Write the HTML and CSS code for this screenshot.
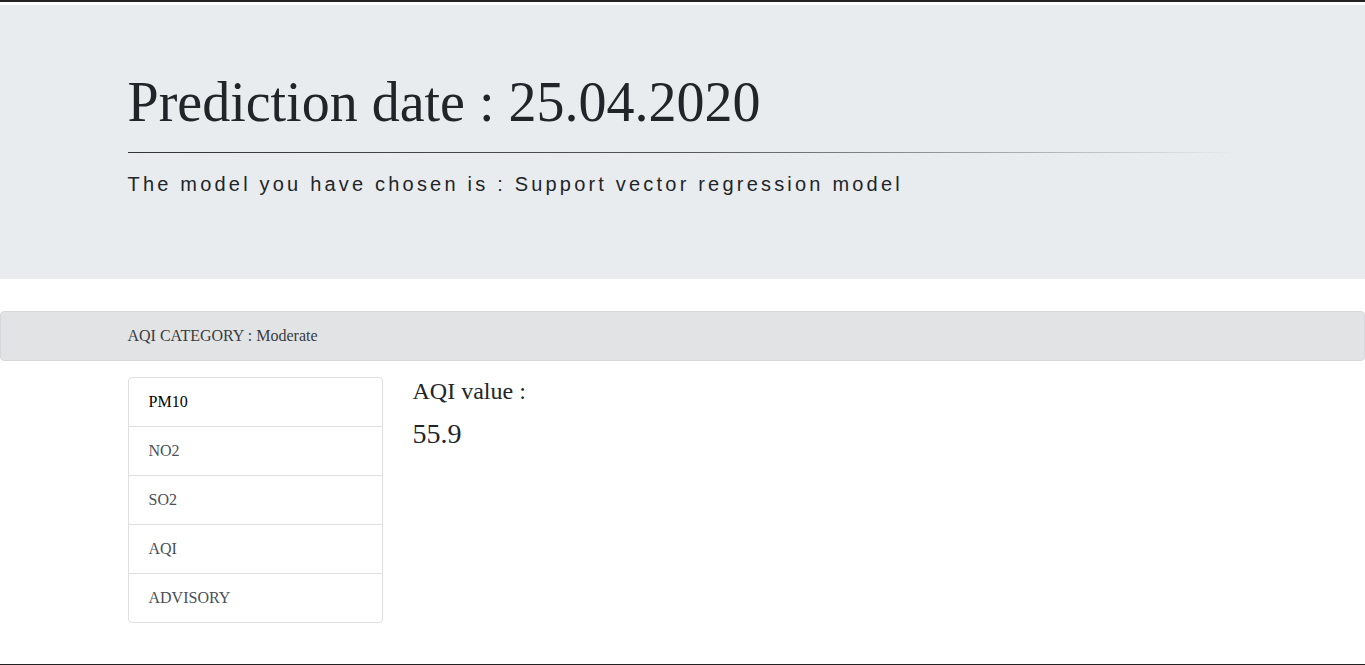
FILE: index.html
```html
<!DOCTYPE html>
<html lang="en">
<head>
    <meta charset="UTF-8">
    <meta name="viewport" content="width=device-width, initial-scale=1.0">
    <title>AQI Prediction</title>
    <link rel="stylesheet" href="styles.css">
</head>
<body>
    <div class="top-line"></div>

    <!-- En-tete -->
    <div class="jumbotron">
        <div class="container">
            <h1>Prediction date : 25.04.2020</h1>
            <hr class="fade-line">
            <p class="lead">The model you have chosen is : Support vector regression model</p>
        </div>
    </div>

    <div class="alert">
        <div class="container">AQI CATEGORY : Moderate</div>
    </div>

    <div class="container">
        <div class="row">
            <div class="side">
                <div class="list-group">
                    <a class="list-item current">PM10</a>
                    <a class="list-item">NO2</a>
                    <a class="list-item">SO2</a>
                    <a class="list-item">AQI</a>
                    <a class="list-item">ADVISORY</a>
                </div>
            </div>
            <div class="content">
                <h4>AQI value :</h4>
                <h3>55.9</h3>
            </div>
        </div>
    </div>

    <div class="footer"></div>
</body>
</html>
```

FILE: styles.css
```css
body {
    margin: 0;
    font-family: "Liberation Serif", "Times New Roman", serif;
    font-size: 16px;
    line-height: 1.5;
    color: #212529;
    background: #ffffff;
}

.top-line {
    height: 2px;
    background: #222222;
    margin-bottom: 3px;
}

.container {
    max-width: 1110px;
    margin: 0 auto;
    padding: 0 15px;
}

.jumbotron {
    background: #e9ecef;
    padding: 64px 0;
    margin-bottom: 32px;
}

h1 {
    font-size: 56px;
    font-weight: 400;
    line-height: 1.2;
    margin: 0;
}

.fade-line {
    border: 0;
    height: 1px;
    margin: 16px 0;
    background: linear-gradient(to right, #333333 0%, #555555 50%, #8a8d90 70%, rgba(233, 236, 239, 0) 100%);
}

.lead {
    font-family: "Liberation Sans", Arial, sans-serif;
    font-size: 20px;
    letter-spacing: 3.2px;
    margin: 0 0 16px;
}

.alert {
    background: #e2e3e5;
    border: 1px solid #d6d8db;
    border-radius: 4px;
    color: #383d41;
    padding: 12px 0;
    margin-bottom: 16px;
    line-height: 24px;
}

.row {
    display: flex;
    gap: 30px;
}

.side {
    width: 255px;
    flex-shrink: 0;
}

.list-group {
    border: 1px solid #dfdfdf;
    border-radius: 4px;
}

.list-item {
    display: block;
    padding: 12px 20px;
    color: #495057;
    line-height: 24px;
    border-top: 1px solid #dfdfdf;
}

.list-item:first-child {
    border-top: 0;
}

.list-item.current {
    color: #000000;
}

.content h4 {
    font-size: 24px;
    font-weight: 400;
    line-height: 1.2;
    margin: 0 0 11px;
}

.content h3 {
    font-size: 28px;
    font-weight: 400;
    line-height: 1.2;
    margin: 0;
}

.footer {
    margin-top: 41px;
    height: 2px;
    background: #222222;
}
```
